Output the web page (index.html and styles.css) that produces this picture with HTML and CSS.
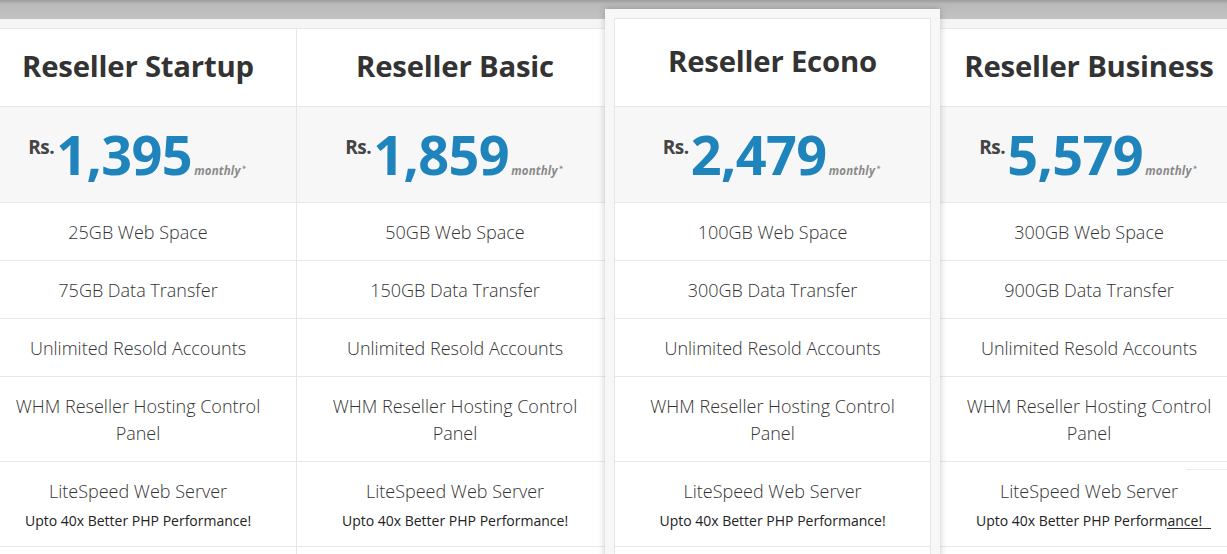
FILE: index.html
```html
<!DOCTYPE html>
<html>
<head>
<meta charset="utf-8">
<link rel="stylesheet" href="styles.css">
</head>
<body>
<div class="topbar"></div>
<div class="plans">
  <div class="plan">
    <div class="cell head"><h2>Reseller Startup</h2></div>
    <div class="cell price"><span class="cur">Rs.</span><span class="amt">1,395</span><span class="per">monthly<sup>*</sup></span></div>
    <div class="cell feat">25GB Web Space</div>
    <div class="cell feat">75GB Data Transfer</div>
    <div class="cell feat">Unlimited Resold Accounts</div>
    <div class="cell feat tall">WHM Reseller Hosting Control Panel</div>
    <div class="cell feat tall sub">LiteSpeed Web Server<small>Upto 40x Better PHP Performance!</small></div>
    <div class="cell feat">&nbsp;</div>
  </div>
  <div class="plan">
    <div class="cell head"><h2>Reseller Basic</h2></div>
    <div class="cell price"><span class="cur">Rs.</span><span class="amt">1,859</span><span class="per">monthly<sup>*</sup></span></div>
    <div class="cell feat">50GB Web Space</div>
    <div class="cell feat">150GB Data Transfer</div>
    <div class="cell feat">Unlimited Resold Accounts</div>
    <div class="cell feat tall">WHM Reseller Hosting Control Panel</div>
    <div class="cell feat tall sub">LiteSpeed Web Server<small>Upto 40x Better PHP Performance!</small></div>
    <div class="cell feat">&nbsp;</div>
  </div>
  <div class="plan featured">
    <div class="inner">
      <div class="cell head"><h2>Reseller Econo</h2></div>
      <div class="cell price"><span class="cur">Rs.</span><span class="amt">2,479</span><span class="per">monthly<sup>*</sup></span></div>
      <div class="cell feat">100GB Web Space</div>
      <div class="cell feat">300GB Data Transfer</div>
      <div class="cell feat">Unlimited Resold Accounts</div>
      <div class="cell feat tall">WHM Reseller Hosting Control Panel</div>
      <div class="cell feat tall sub">LiteSpeed Web Server<small>Upto 40x Better PHP Performance!</small></div>
      <div class="cell feat">&nbsp;</div>
    </div>
  </div>
  <div class="plan">
    <div class="cell head"><h2>Reseller Business</h2></div>
    <div class="cell price"><span class="cur">Rs.</span><span class="amt">5,579</span><span class="per">monthly<sup>*</sup></span></div>
    <div class="cell feat">300GB Web Space</div>
    <div class="cell feat">900GB Data Transfer</div>
    <div class="cell feat">Unlimited Resold Accounts</div>
    <div class="cell feat tall">WHM Reseller Hosting Control Panel</div>
    <div class="cell feat tall sub">LiteSpeed Web Server<small>Upto 40x Better PHP Performance!</small></div>
    <div class="cell feat">&nbsp;</div>
  </div>
</div>
<div class="widget"><span class="uline"></span></div>
</body>
</html>
```

FILE: styles.css
```css
html, body {
  margin: 0;
  padding: 0;
}
body {
  width: 1227px;
  height: 554px;
  overflow: hidden;
  background: #f5f5f5;
  font-family: "Open Sans", "Liberation Sans", sans-serif;
  color: #333;
  position: relative;
}
.topbar {
  height: 19px;
  background: linear-gradient(#9c9c9c 0px, #b9b9b9 4px, #c3c3c3 19px);
}
.plans {
  display: grid;
  grid-template-columns: repeat(4, 317px);
  margin-left: -20px;
  margin-top: -10px;
  align-items: start;
}
.plan {
  margin-top: 19px;
  border-top: 1px solid #e8e8e8;
  border-right: 1px solid #e6e6e6;
  background: #fff;
}
.featured {
  position: relative;
  z-index: 2;
  margin: 0 -9px;
  padding: 9px;
  border: none;
  background: #f7f7f7;
  box-shadow: 0 0 7px rgba(0, 0, 0, 0.22);
}
.featured .inner {
  border: 1px solid #e6e6e6;
  background: #fff;
}
.cell {
  box-sizing: border-box;
  border-bottom: 1px solid #e8e8e8;
  text-align: center;
}
.head {
  height: 78px;
  display: flex;
  align-items: center;
  justify-content: center;
}
.featured .head {
  height: 88px;
}
.head h2 {
  margin: 0;
  font-family: "Open Sans", sans-serif;
  font-weight: 700;
  font-size: 29.3px;
  letter-spacing: -0.2px;
  color: #333;
  margin-top: -3px;
}
.price {
  height: 96px;
  background: #f7f7f7;
  display: flex;
  justify-content: center;
  align-items: baseline;
  padding-top: 17px;
  padding-right: 2px;
}
.cur {
  font-family: "Open Sans", sans-serif;
  font-weight: 700;
  font-size: 19px;
  color: #444;
  align-self: flex-start;
  margin-top: 10px;
  margin-right: 2px;
  letter-spacing: -0.5px;
}
.amt {
  font-family: "Open Sans", sans-serif;
  font-weight: 700;
  font-size: 54px;
  line-height: 60px;
  color: #1f84bb;
  letter-spacing: -0.6px;
}
.per {
  font-family: "Open Sans", sans-serif;
  font-style: italic;
  font-weight: 700;
  font-size: 11.5px;
  color: #8a8a8a;
  margin-left: 2px;
  letter-spacing: 0.2px;
}
.per sup {
  font-size: 7px;
  vertical-align: 4px;
  margin-left: 1px;
}
.feat {
  height: 58px;
  display: flex;
  flex-direction: column;
  align-items: center;
  justify-content: center;
  font-family: "Open Sans", sans-serif;
  font-weight: 300;
  font-size: 18px;
  line-height: 27px;
  color: #333;
  padding: 2px 12px 0;
}
.feat.tall {
  height: 85px;
  padding: 2px 34px 0;
}
.feat.sub {
  padding-top: 0;
}
.feat small {
  display: block;
  font-weight: 400;
  font-size: 14px;
  line-height: 20px;
  color: #222;
  margin-top: 6px;
  white-space: nowrap;
}
.widget {
  position: absolute;
  left: 1186px;
  top: 469px;
  width: 41px;
  height: 85px;
  border-top: 1px solid #ececec;
}
.uline {
  position: absolute;
  left: -19px;
  top: 58px;
  width: 44px;
  height: 1px;
  background: #333;
}
```
